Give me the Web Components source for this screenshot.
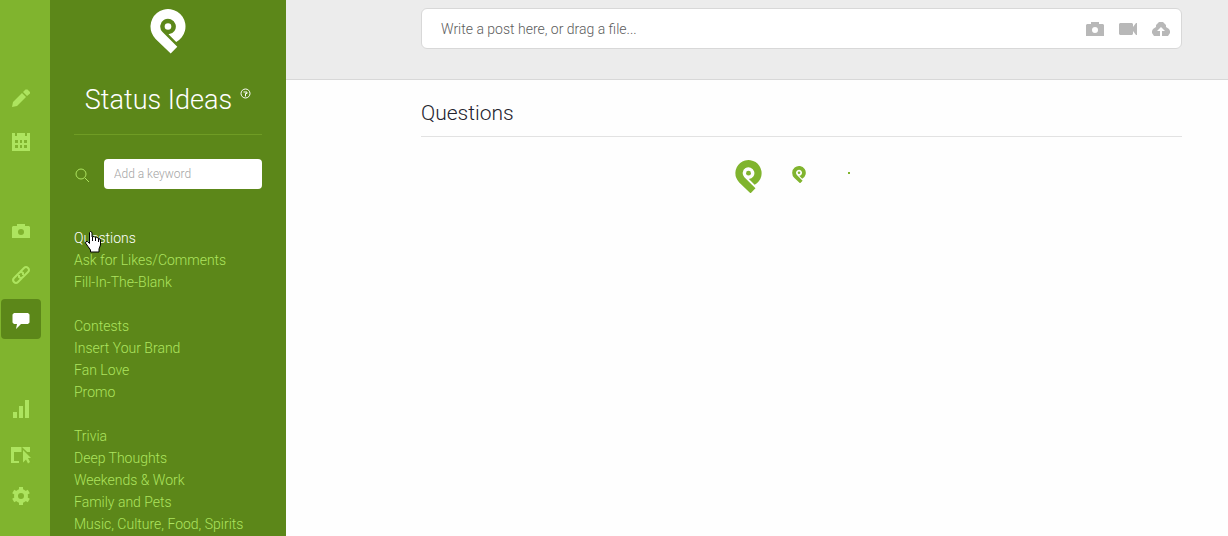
<!DOCTYPE html>
<html lang="en">
<head>
<meta charset="utf-8">
<meta name="viewport" content="width=device-width, initial-scale=1">
<title>Status Ideas</title>
<style>
  :root {
    --rail: #80b42e;
    --side: #5c8719;
    --lime: #ade45f;
    --line: #d8d8d8;
  }
  body { margin: 0; font-family: Roboto, "Open Sans", sans-serif; font-weight: 300; background: #fefefe; }
</style>
</head>
<body>
<status-app></status-app>

<script>
const ICONS = {
  pencil: '<path d="M0 18l1-5L10 4l4 4L5 17zM11 3l2.500-2.500h2L18 3v1.500L15 7z"/>',
  calendar: '<path fill-rule="evenodd" d="M0 0h3v3h2V0h8v3h2V0h3v18H0zM3 7v3h3V7zM8 7v3h2V7zM12 7v3h3V7zM3 12v3h3v-3zM8 12v3h2v-3zM12 12v3h3v-3z"/>',
  camera: '<path fill-rule="evenodd" d="M1 4h4V2h8v2h4l1 1v11H0V5zM9 7a3 3 0 100 6 3 3 0 000-6z"/>',
  link: '<g fill="none" stroke="currentColor" stroke-width="2"><path d="M8 6l4-4q2-2 4 0t0 4l-5 5q-2 2-4 0V9"/><path d="M10 12l-4 4q-2 2-4 0t0-4l5-5q2-2 4 0v2"/></g>',
  chat: '<path d="M2 3h14l1.500 1.500v8L16 14H9l-5 5 1-5H2L.5 12.500v-8z"/>',
  bars: '<path d="M1 13h4v6H1zM7 7h4v12H7zM13 1h4v18h-4z"/>',
  pointer: '<path d="M-1 4h19v5H2v9h5v2h-8z"/><path stroke="var(--rail)" stroke-width="3" paint-order="stroke" d="M11 7l8 8h-3l2 4-2 1.500-2-4-3 3z"/>',
  gear: '<g fill="none" stroke="currentColor" stroke-width="4"><circle cx="9" cy="9" r="5"/><path d="M9 0v4M9 14v4M1.200 4.500l3.500 2M13.300 11.500l3.500 2M1.200 13.500l3.500-2M13.300 6.500l3.500-2"/></g>',
  video: '<path d="M1 3h12l1 1v3l3-4h1v12h-1l-3-4v3l-1 1H1l-1-1V4z"/>',
  upload: '<path fill-rule="evenodd" d="M7 2h4l3 3v2l3 2 1 2v2l-2 3h-6v-5h3L9 7l-4 4h3v5H2l-2-3v-2l1-2 3-2V5z"/>',
  search: '<g fill="none" stroke="currentColor"><circle cx="7" cy="9" r="5"/><path d="M11 13l4 4"/></g>'
};
const icon = (name) => `<svg viewBox="0 0 18 18" width="18" height="18" fill="currentColor" overflow="visible" aria-hidden="true">${ICONS[name]}</svg>`;

const define = (tag, html) => customElements.define(tag, class extends HTMLElement {
  constructor() {
    super();
    const root = this.attachShadow({ mode: 'open' });
    root.innerHTML = typeof html === 'function' ? html(this) : html;
  }
});

define('brand-pin', `
  <style>
    :host { display: block; color: #fff; }
    svg { display: block; width: 100%; }
  </style>
  <svg viewBox="0 0 36 45" fill="currentColor" aria-hidden="true">
    <path d="M5.600 29.900A17.500 17.500 0 1 1 26.200 33L18.500 25.300A7.800 7.800 0 1 0 12.500 23L27.300 37.800 20.700 44.500Z"/>
    <circle cx="18" cy="17.500" r="3.300"/>
  </svg>`);

define('icon-button', (el) => `
  <style>
    :host { display: block; }
    button { display: grid; place-items: center; width: 100%; height: 100%; padding: 0; border: 0; border-radius: 4px; background: none; color: inherit; cursor: pointer; }
    :host([active]) button { background: var(--side); color: #fff; }
    svg { display: block; }
  </style>
  <button type="button" aria-label="${el.getAttribute('label')}">${icon(el.getAttribute('icon'))}</button>`);

define('tool-rail', `
  <style>
    :host { display: block; background: var(--rail); color: var(--lime); }
    nav { display: grid; gap: 49px; padding: 78px 9px 20px 1px; }
    div { display: grid; gap: 4px; }
    icon-button { height: 40px; }
  </style>
  <nav aria-label="Tools">
    <div>
      <icon-button icon="pencil" label="Write"></icon-button>
      <icon-button icon="calendar" label="Schedule"></icon-button>
    </div>
    <div>
      <icon-button icon="camera" label="Photos"></icon-button>
      <icon-button icon="link" label="Links"></icon-button>
      <icon-button icon="chat" label="Ideas" active></icon-button>
    </div>
    <div>
      <icon-button icon="bars" label="Statistics"></icon-button>
      <icon-button icon="pointer" label="Pages"></icon-button>
      <icon-button icon="gear" label="Settings"></icon-button>
    </div>
  </nav>`);

define('keyword-search', `
  <style>
    :host { display: flex; align-items: center; color: var(--lime); }
    label { flex: 0 0 30px; }
    svg { display: block; }
    input { flex: 1; min-width: 0; height: 30px; box-sizing: border-box; padding: 0 10px; border: 0; border-radius: 4px; background: #fff; color: #444; font: inherit; font-size: 12px; }
    input::placeholder { color: #a4a4a4; opacity: 1; }
  </style>
  <label for="keyword" aria-label="Search">${icon('search')}</label>
  <input id="keyword" type="text" placeholder="Add a keyword">`);

define('idea-group', `
  <style>:host { display: grid; }</style>
  <slot></slot>`);

define('idea-link', `
  <style>
    :host { display: block; position: relative; line-height: 22px; font-size: 14px; color: var(--lime); }
    :host([current]) { color: #fff; }
    a { color: inherit; text-decoration: none; }
    ::slotted(svg) { position: absolute; left: 10px; top: 4px; }
  </style>
  <a href="#"><slot></slot></a><slot name="cursor"></slot>`);

define('idea-sidebar', `
  <style>
    :host { display: block; background: var(--side); color: #fff; }
    .inner { padding: 9px 24px 0; }
    brand-pin { width: 36px; margin: 0 auto; }
    h1 { display: flex; justify-content: center; gap: 8px; margin: 26px 0 0; padding-bottom: 14px; border-bottom: 1px solid #6f9c24; font-size: 27px; line-height: 40px; font-weight: 300; white-space: nowrap; }
    h1 a { color: inherit; padding-top: 8px; height: 11px; }
    h1 svg { display: block; }
    keyword-search { margin: 24px 0 38px; }
    nav { display: grid; gap: 22px; }
  </style>
  <div class="inner">
    <brand-pin></brand-pin>
    <h1>Status Ideas <a href="#" aria-label="Help"><svg width="11" height="11" viewBox="0 0 11 11" fill="none" stroke="currentColor" aria-hidden="true"><circle cx="5.500" cy="5.500" r="4.500"/><path d="M3.500 4h3.500v1.500H5.500v3"/></svg></a></h1>
    <keyword-search></keyword-search>
    <nav aria-label="Idea categories">
      <idea-group>
        <idea-link current>Questions<svg slot="cursor" width="18" height="23" viewBox="0 0 18 23" aria-hidden="true"><path fill="#fff" stroke="#000" d="M5.500 1.500l1-1 1.500 1V6l2-.5 1 1 2-.5 1 1.500 2 .5.500 2v4l-1.500 4v3H6.500v-2L4 15.500 1.500 12l.5-1.500h1.500l2 2z"/><path fill="none" stroke="#000" d="M8.500 6v4M11.500 7v3M14.500 8v3"/></svg></idea-link>
        <idea-link>Ask for Likes/Comments</idea-link>
        <idea-link>Fill-In-The-Blank</idea-link>
      </idea-group>
      <idea-group>
        <idea-link>Contests</idea-link>
        <idea-link>Insert Your Brand</idea-link>
        <idea-link>Fan Love</idea-link>
        <idea-link>Promo</idea-link>
      </idea-group>
      <idea-group>
        <idea-link>Trivia</idea-link>
        <idea-link>Deep Thoughts</idea-link>
        <idea-link>Weekends &amp; Work</idea-link>
        <idea-link>Family and Pets</idea-link>
        <idea-link>Music, Culture, Food, Spirits</idea-link>
      </idea-group>
    </nav>
  </div>`);

define('post-composer', `
  <style>
    :host { display: block; padding: 8px 46px 30px 135px; background: #ececec; border-bottom: 1px solid var(--line); }
    form { display: flex; align-items: center; gap: 15px; height: 39px; padding: 0 11px 0 19px; border: 1px solid var(--line); border-radius: 6px; background: #fff; color: #b8b8b8; }
    input { flex: 1; min-width: 0; height: 37px; padding: 0; border: 0; background: none; color: #444; font: inherit; font-size: 14px; outline: 0; }
    input::placeholder { color: #5c5c5c; opacity: 1; }
    icon-button { width: 18px; height: 30px; }
  </style>
  <form>
    <input type="text" aria-label="Post text" placeholder="Write a post here, or drag a file...">
    <icon-button icon="camera" label="Add photo"></icon-button>
    <icon-button icon="video" label="Add video"></icon-button>
    <icon-button icon="upload" label="Upload file"></icon-button>
  </form>`);

define('idea-feed', `
  <style>
    :host { display: block; padding: 18px 46px 0 135px; }
    h2 { margin: 0; padding-bottom: 8px; border-bottom: 1px solid #e2e2e2; font-size: 21px; line-height: 30px; font-weight: 300; color: #24232e; }
    .loading { display: flex; justify-content: center; align-items: center; height: 33px; padding-top: 23px; gap: 30px; }
    brand-pin { color: var(--rail); width: 27px; }
    .medium { width: 14px; margin-bottom: 4px; }
    .dot { width: 2px; height: 2px; margin: 0 18px 8px 12px; background: var(--rail); }
  </style>
  <h2>Questions</h2>
  <div class="loading" role="status" aria-label="Loading">
    <brand-pin></brand-pin>
    <brand-pin class="medium"></brand-pin>
    <span class="dot"></span>
  </div>`);

define('status-app', `
  <style>
    :host { display: grid; grid-template-columns: 50px 236px minmax(0, 1fr); min-height: 100vh; }
  </style>
  <tool-rail></tool-rail>
  <idea-sidebar></idea-sidebar>
  <main>
    <post-composer></post-composer>
    <idea-feed></idea-feed>
  </main>`);
</script>
</body>
</html>
